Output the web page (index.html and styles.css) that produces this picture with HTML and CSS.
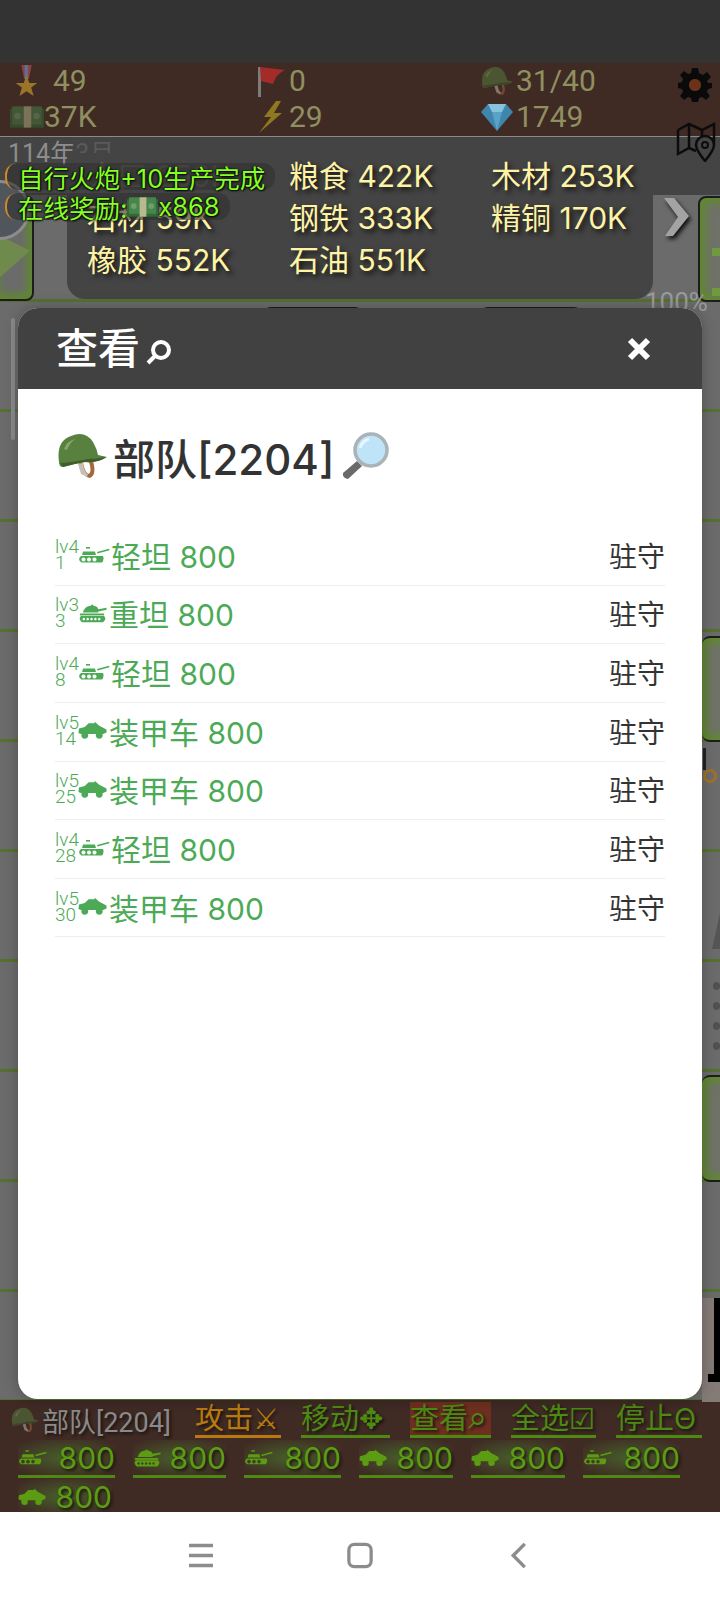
FILE: index.html
```html
<!DOCTYPE html>
<html>
<head>
  <meta charset="utf-8">
  <link rel="stylesheet" href="styles.css">
</head>

<body>
  <svg class="defs" width="0" height="0">
    <symbol id="light" viewBox="0 0 33 16">
      <rect x="8" y="0" width="4" height="1.6" />
      <path d="M5 4.5 H17 L18 8 H4 Z" />
      <path d="M19 5 L31 1.8 L31.5 3.2 L19.5 6.6 Z" />
      <path fill-rule="evenodd" d="M3 9 H25 Q26.500 12.500 24 15.500 H3.500 Q-1 12.500 3 9 Z M5.500 10.500 a2 2 0 1 0 .01 0 Z M11 10.500 a2 2 0 1 0 .01 0 Z M16.500 10.500 a2 2 0 1 0 .01 0 Z" />
    </symbol>
    <symbol id="heavy" viewBox="0 0 30 19">
      <path d="M6 6 Q8 2 13 1.500 L15 0 L16 1.500 Q20 2 21 5 L29.500 3.500 V5.500 L21 7.500 V8.500 H5 Z" />
      <rect x="2" y="9.500" width="25" height="2" />
      <path fill-rule="evenodd" d="M3 12 H27 Q30 15 26 18.500 H4 Q0 15 3 12 Z M6 14 a1.300 1.300 0 1 0 .01 0 Z M10 14 a1.300 1.300 0 1 0 .01 0 Z M14 14 a1.300 1.300 0 1 0 .01 0 Z M18 14 a1.300 1.300 0 1 0 .01 0 Z M22 14 a1.300 1.300 0 1 0 .01 0 Z" />
    </symbol>
    <symbol id="car" viewBox="0 0 30 18">
      <path d="M1 7 L7 5.500 L11 1.500 H17 L17.500 0 L19 1.500 L22 4 L29.500 8 V11 L26 12.500 H3 L0.500 11.500 Z" />
      <circle cx="7" cy="14" r="3.500" />
      <circle cx="22" cy="14" r="3.500" />
    </symbol>
    <symbol id="helmet" viewBox="0 0 50 46">
      <path d="M22 30 Q25 44 33 45 Q40 42 36 28 L32 29 Q35 38 32 41 Q28 40 26 30 Z" fill="#a5683a" />
      <path d="M21 31 L24 41 L30 44 L31 41 Q27 39 26 30 Z" fill="#c8c0b4" />
      <path d="M2 29 Q-1 8 14 3 Q28 -3 36 9 Q40 16 41 22 L50 24 Q42 30 28 29 Q16 31 6 34 Q2 34 2 29 Z" fill="#58803f" />
      <path d="M7 16 Q10 8 18 6 Q12 11 10 17 Z" fill="#86a86a" />
      <path d="M3 30 Q18 29 30 26 Q40 26 49 24 Q42 30 28 29 Q16 31 6 34 Z" fill="#3e5e2c" />
    </symbol>
    <symbol id="cash" viewBox="0 0 32 22">
      <rect x="0" y="3" width="32" height="18" fill="#2f6a38" />
      <rect x="2" y="1" width="28" height="17" fill="#47854a" />
      <rect x="13" y="1" width="7" height="20" fill="#b9b88f" />
      <circle cx="7" cy="10" r="3" fill="#6da06c" />
      <circle cx="25" cy="10" r="3" fill="#6da06c" />
    </symbol>
  </svg>

  <div class="screen">
    <div class="status"></div>

    <div class="top">
      <div class="stat">
        <svg class="ico ico-a" viewBox="0 0 34 34">
          <path d="M11 0 H22 L19 15 H14 Z" fill="#8a4444" />
          <path d="M14.500 0 H18 V15 H14.500 Z" fill="#626f92" />
          <path d="M16.500 11 L19.500 19 L28 19 L21.500 24 L24 33 L16.500 28 L9 33 L11.500 24 L5 19 L13.500 19 Z" fill="#9a7428" />
        </svg>
        <span class="val push">49</span>
      </div>
      <div class="stat">
        <svg class="ico ico-b" viewBox="0 0 30 32">
          <rect x="2" y="2" width="3" height="30" fill="#7b7b7b" />
          <path d="M4 2 L29 5 Q20 9 17 19 L5 16 Z" fill="#a32c28" />
        </svg>
        <span class="val">0</span>
      </div>
      <div class="stat">
        <svg class="ico ico-c dim"><use href="#helmet" /></svg>
        <span class="val">31/40</span>
      </div>
      <div class="stat">
        <svg class="ico ico-a dim"><use href="#cash" /></svg>
        <span class="val">37K</span>
      </div>
      <div class="stat">
        <svg class="ico ico-b" viewBox="0 0 30 32">
          <path d="M20 0 L8 16 H15 L3 32 L26 12 H18 L25 0 Z" fill="#8f7820" />
        </svg>
        <span class="val">29</span>
      </div>
      <div class="stat">
        <svg class="ico ico-c" viewBox="0 0 32 28">
          <path d="M7 1 H25 L32 9 L16 28 L0 9 Z" fill="#3f86ad" />
          <path d="M7 1 L11 9 H21 L25 1 Z" fill="#86c2de" />
          <path d="M11 9 L16 28 L21 9 Z" fill="#5ba2c8" />
        </svg>
        <span class="val">1749</span>
      </div>
    </div>

    <div class="stage">
      <div class="date-bar"><span class="date">114年<i>3月</i></span></div>
      <div class="map">
        <div class="tile tile-left">
          <svg class="tile-arrow" viewBox="0 0 34 70"><path d="M0 22 L32 38 L0 66 Z" fill="#6f8a4c" /></svg>
        </div>
        <div class="tile tile-right"></div>
        <div class="tile tile-mid-a"></div>
        <div class="tile tile-mid-b"></div>
        <div class="tile tile-side-a"></div>
        <div class="tile tile-side-b"></div>
        <div class="ring"></div>
        <div class="peak"></div>
        <div class="dots"><span></span><span></span><span></span><span></span></div>
        <div class="land"></div>
        <div class="pct">100%</div>
        <svg class="next" viewBox="0 0 28 40"><path d="M1 0 H11 L26 18 L10 38 H2 L15 19 Z" fill="#a3a3a3" /></svg>
        <div class="scroll"></div>
      </div>

      <div class="res">
        <div class="res-cell">人口 259K</div>
        <div class="res-cell">粮食 422K</div>
        <div class="res-cell">木材 253K</div>
        <div class="res-cell">石材 59K</div>
        <div class="res-cell">钢铁 333K</div>
        <div class="res-cell">精铜 170K</div>
        <div class="res-cell">橡胶 552K</div>
        <div class="res-cell">石油 551K</div>
      </div>

      <div class="orb"></div>
      <div class="toasts">
        <div class="toast">自行火炮+10生产完成</div>
        <div class="toast">在线奖励:<svg class="toast-cash"><use href="#cash" /></svg>x868</div>
      </div>

      <div class="modal">
        <div class="modal-head">
          <span class="modal-title">查看<svg class="title-lens" viewBox="0 0 26 26"><circle cx="15" cy="11" r="8" fill="none" stroke="#fff" stroke-width="4" /><path d="M9 17 L2 24" stroke="#fff" stroke-width="4" /></svg></span>
          <svg class="close" viewBox="0 0 26 26"><path d="M4 4 L22 22 M22 4 L4 22" stroke="#fff" stroke-width="6" /></svg>
        </div>
        <div class="modal-body">
          <div class="army">
            <svg class="army-helmet"><use href="#helmet" /></svg>
            <span class="army-name">部队[2204]</span>
            <svg class="army-lens" viewBox="0 0 50 48">
              <path d="M3 41 L17 29 L22 34 L8 47 Q2 46 3 41 Z" fill="#6a6a6a" />
              <circle cx="31" cy="18" r="16" fill="#bfe3f7" stroke="#a9b3b8" stroke-width="3.500" />
              <path d="M20 16 Q22 9 29 7" stroke="#e8f6ff" stroke-width="3" fill="none" />
            </svg>
          </div>

          <div class="row">
            <span class="unit"><span class="lv">lv4<br>1</span><svg class="tank-l"><use href="#light" /></svg>轻坦 800</span>
            <span class="state">驻守</span>
          </div>
          <div class="row">
            <span class="unit"><span class="lv">lv3<br>3</span><svg class="tank-h"><use href="#heavy" /></svg>重坦 800</span>
            <span class="state">驻守</span>
          </div>
          <div class="row">
            <span class="unit"><span class="lv">lv4<br>8</span><svg class="tank-l"><use href="#light" /></svg>轻坦 800</span>
            <span class="state">驻守</span>
          </div>
          <div class="row">
            <span class="unit"><span class="lv">lv5<br>14</span><svg class="tank-c"><use href="#car" /></svg>装甲车 800</span>
            <span class="state">驻守</span>
          </div>
          <div class="row">
            <span class="unit"><span class="lv">lv5<br>25</span><svg class="tank-c"><use href="#car" /></svg>装甲车 800</span>
            <span class="state">驻守</span>
          </div>
          <div class="row">
            <span class="unit"><span class="lv">lv4<br>28</span><svg class="tank-l"><use href="#light" /></svg>轻坦 800</span>
            <span class="state">驻守</span>
          </div>
          <div class="row">
            <span class="unit"><span class="lv">lv5<br>30</span><svg class="tank-c"><use href="#car" /></svg>装甲车 800</span>
            <span class="state">驻守</span>
          </div>
        </div>
      </div>

      <svg class="map-icon" viewBox="0 0 40 40">
        <path d="M2 8 L13 2 L26 8 L38 2 V22 M2 8 V32 L13 26 L20 29 M13 2 V26 M26 8 V18" fill="none" stroke="#0c0c0c" stroke-width="2.500" />
        <path d="M29 39 Q20 28 20 23 A9 9 0 0 1 38 23 Q38 28 29 39 Z" fill="#444" stroke="#0c0c0c" stroke-width="2.500" />
        <circle cx="29" cy="23" r="3" fill="none" stroke="#0c0c0c" stroke-width="2" />
      </svg>
      <svg class="gear" viewBox="0 0 34 34">
        <path fill="#0a0a0a" fill-rule="evenodd" d="M14 0 H20 L21 5 L25 7 L29 4 L33 9 L29 13 L30 15 H34 V20 L30 21 L29 24 L32 28 L28 32 L24 29 L21 30 L20 34 H14 L13 30 L10 29 L6 32 L2 28 L5 24 L4 21 L0 20 V15 L4 14 L5 11 L2 7 L6 3 L10 6 L13 5 Z M17 11 a6 6 0 1 0 .01 0 Z" />
        <circle cx="17" cy="17" r="6" fill="#6a3218" />
      </svg>
    </div>

    <div class="bottom">
      <div class="acts">
        <svg class="act-helmet dim"><use href="#helmet" /></svg>
        <span class="act-name">部队[2204]</span>
        <span class="act act-atk w-86">攻击⚔</span>
        <span class="act w-89">移动✥</span>
        <span class="act act-on w-81">查看<i>⌕</i></span>
        <span class="act w-85">全选☑</span>
        <span class="act w-86">停止Θ</span>
      </div>
      <div class="squads">
        <span class="squad w-97"><svg class="sq-l"><use href="#light" /></svg>800</span>
        <span class="squad w-93"><svg class="sq-h"><use href="#heavy" /></svg>800</span>
        <span class="squad w-97"><svg class="sq-l"><use href="#light" /></svg>800</span>
        <span class="squad w-94"><svg class="sq-c"><use href="#car" /></svg>800</span>
        <span class="squad w-94"><svg class="sq-c"><use href="#car" /></svg>800</span>
        <span class="squad w-97"><svg class="sq-l"><use href="#light" /></svg>800</span>
        <span class="squad w-94"><svg class="sq-c"><use href="#car" /></svg>800</span>
      </div>
    </div>

    <div class="nav">
      <svg class="nav-ico" viewBox="0 0 26 26"><path d="M1 3 H25 M1 13 H25 M1 23 H25" stroke="#8c8c8c" stroke-width="3.500" /></svg>
      <svg class="nav-ico" viewBox="0 0 28 28"><rect x="2" y="2" width="24" height="24" rx="6" fill="none" stroke="#8c8c8c" stroke-width="3.500" /></svg>
      <svg class="nav-ico" viewBox="0 0 18 28"><path d="M15 2 L3 14 L15 26" fill="none" stroke="#8c8c8c" stroke-width="3.500" /></svg>
    </div>
  </div>
</body>

</html>
```

FILE: styles.css
```css
* {
  box-sizing: border-box;
}

body {
  margin: 0;
  font-family: Inter, "Noto Sans CJK SC", "DejaVu Sans", sans-serif;
}

.defs {
  position: absolute;
}

.screen {
  display: flex;
  flex-direction: column;
  width: 720px;
  height: 1600px;
  overflow: hidden;
}

.status {
  height: 63px;
  background: #333;
}

.top {
  display: grid;
  grid-template-columns: 246px 225px 1fr;
  grid-auto-rows: 36px;
  height: 73px;
  padding-left: 10px;
  background: #3f2a24;
}

.stat {
  display: flex;
  align-items: center;
}

.ico-a {
  width: 34px;
  height: 32px;
}

.ico-b {
  width: 30px;
  height: 32px;
  margin-right: 3px;
}

.ico-c {
  width: 32px;
  height: 30px;
  margin-right: 3px;
}

.dim {
  opacity: 0.5;
}

.val {
  font-family: Roboto, sans-serif;
  font-size: 30px;
  line-height: 1;
  color: #8f9060;
}

.push {
  margin-left: 9px;
}

.stage {
  position: relative;
  flex: 1;
  background: #6b6b6b;
}

.date-bar {
  height: 59px;
  padding: 2px 0 0 8px;
  border-top: 1px solid #8a8a8a;
  background: #444;
}

.date {
  font-family: Roboto, "Noto Sans CJK SC", sans-serif;
  font-size: 25px;
  line-height: 30px;
  color: #8d8d8d;
}

.date i {
  font-style: normal;
  color: #5a5a5a;
}

.map {
  position: relative;
  height: 1205px;
  background:
    repeating-linear-gradient(to bottom, transparent 0, transparent 104px, #55702f 104px, #55702f 107px, transparent 107px, transparent 110px);
}

.tile {
  position: absolute;
  border: 2px solid #1d1d1d;
  border-radius: 8px;
  box-shadow: inset 0 0 8px 5px #5f8a2c;
  background: #6f7268;
}

.tile-left {
  left: -8px;
  top: 0;
  width: 42px;
  height: 106px;
  background: #6b6b6b;
}

.tile-arrow {
  position: absolute;
  left: 6px;
  top: 16px;
  width: 32px;
  height: 70px;
}

.tile-right {
  left: 698px;
  top: 1px;
  width: 40px;
  height: 106px;
}

.tile-right::after {
  content: "";
  position: absolute;
  left: 12px;
  top: 50px;
  width: 10px;
  height: 32px;
  border-top: 8px solid #6f9a40;
  border-bottom: 8px solid #6f9a40;
}

.tile-mid-a {
  left: 263px;
  top: 112px;
  width: 100px;
  height: 50px;
}

.tile-mid-b {
  left: 480px;
  top: 112px;
  width: 102px;
  height: 50px;
}

.tile-side-a {
  left: 702px;
  top: 441px;
  width: 40px;
  height: 106px;
  border-width: 2px 0 2px 0;
}

.tile-side-b {
  left: 702px;
  top: 880px;
  width: 40px;
  height: 107px;
  border-width: 2px 0 2px 0;
}

.ring {
  position: absolute;
  left: 703px;
  top: 574px;
  width: 14px;
  height: 14px;
  border: 3px solid #a0702a;
  border-radius: 50%;
}

.ring::before {
  content: "";
  position: absolute;
  left: -3px;
  top: -24px;
  width: 3px;
  height: 22px;
  background: #222;
}

.peak {
  position: absolute;
  left: 712px;
  top: 718px;
  width: 0;
  height: 0;
  border-left: 8px solid transparent;
  border-bottom: 36px solid #555;
}

.dots {
  position: absolute;
  left: 713px;
  top: 787px;
  display: flex;
  flex-direction: column;
  gap: 12px;
}

.dots span {
  display: block;
  width: 7px;
  height: 8px;
  border-radius: 50%;
  background: #505050;
}

.land {
  position: absolute;
  left: 702px;
  top: 1103px;
  width: 18px;
  height: 104px;
  background: #847a76;
}

.land::after {
  content: "";
  position: absolute;
  right: 0;
  top: 0;
  width: 6px;
  height: 84px;
  background: #000;
}

.land::before {
  content: "";
  position: absolute;
  right: 0;
  top: 76px;
  width: 12px;
  height: 8px;
  background: #000;
}

.pct {
  position: absolute;
  left: 645px;
  top: 92px;
  font-family: Roboto, sans-serif;
  font-size: 26px;
  line-height: 30px;
  color: #9a9a9a;
}

.next {
  position: absolute;
  left: 663px;
  top: 3px;
  width: 28px;
  height: 40px;
  filter: drop-shadow(2px 3px 2px #111);
}

.scroll {
  position: absolute;
  left: 11px;
  top: 123px;
  width: 4px;
  height: 122px;
  border-radius: 2px;
  background: #8a8a8a;
}

.res {
  position: absolute;
  left: 67px;
  top: 17px;
  display: grid;
  grid-template-columns: 202px 202px 1fr;
  grid-auto-rows: 42px;
  width: 586px;
  height: 146px;
  padding: 0 0 0 20px;
  border-radius: 0 0 18px 18px;
  background: #444;
}

.res-cell {
  display: flex;
  align-items: center;
  font-size: 30px;
  white-space: nowrap;
  color: #fff3a6;
  text-shadow: 3px 3px 5px #111;
}

.res-cell:first-child {
  color: #615f49;
  text-shadow: none;
}

.orb {
  position: absolute;
  left: -30px;
  top: 44px;
  width: 60px;
  height: 60px;
  border: 3px solid #8c8c8c;
  border-radius: 50%;
  background: #50565c;
}

.toasts {
  position: absolute;
  left: 5px;
  top: 27px;
  display: flex;
  flex-direction: column;
  align-items: flex-start;
  gap: 3px;
}

.toast {
  display: flex;
  align-items: center;
  height: 27px;
  padding: 0 10px 0 11px;
  border-left: 2px solid #c98a2a;
  border-radius: 12px;
  font-size: 25.500px;
  white-space: nowrap;
  color: #86ff22;
  background: rgba(48, 48, 48, 0.6);
  text-shadow: 1px 1px 2px #000, -1px 0 2px #000;
}

.toast-cash {
  width: 31px;
  height: 22px;
}

.modal {
  position: absolute;
  left: 18px;
  top: 172px;
  display: flex;
  flex-direction: column;
  width: 684px;
  height: 1091px;
  border-radius: 20px;
  overflow: hidden;
  background: #fff;
  box-shadow: 0 0 14px rgba(0, 0, 0, 0.25);
}

.modal-head {
  display: flex;
  flex: none;
  align-items: center;
  justify-content: space-between;
  height: 81px;
  padding: 0 50px 0 38px;
  background: #414141;
}

.modal-title {
  display: flex;
  align-items: center;
  font-size: 42px;
  font-weight: 500;
  line-height: 80px;
  color: #fff;
}

.title-lens {
  width: 26px;
  height: 26px;
  margin: 6px 0 0 6px;
}

.close {
  width: 26px;
  height: 26px;
}

.modal-body {
  padding: 0 37px;
}

.army {
  display: flex;
  align-items: center;
  height: 138px;
  padding-bottom: 4px;
}

.army-helmet {
  width: 50px;
  height: 46px;
  margin: 0 6px 0 2px;
}

.army-name {
  font-size: 42px;
  font-weight: 500;
  color: #333;
}

.army-lens {
  width: 50px;
  height: 48px;
  margin-left: 6px;
}

.row {
  display: flex;
  align-items: center;
  justify-content: space-between;
  height: 58.650px;
  padding-bottom: 2px;
  border-bottom: 1px solid #eee;
}

.unit {
  display: flex;
  align-items: center;
  font-size: 30px;
  color: #4caa57;
}

.lv {
  width: 23px;
  font-family: Roboto, sans-serif;
  font-size: 19px;
  font-weight: 300;
  line-height: 16px;
}

.tank-l {
  width: 33px;
  height: 16px;
  fill: #4caa57;
}

.tank-h,
.tank-c {
  width: 29px;
  height: 19px;
  margin-right: 2px;
  fill: #4caa57;
}

.state {
  font-size: 28px;
  color: #333;
}

.map-icon {
  position: absolute;
  left: 676px;
  top: -14px;
  width: 40px;
  height: 40px;
}

.gear {
  position: absolute;
  left: 678px;
  top: -68px;
  width: 34px;
  height: 34px;
}

.bottom {
  height: 112px;
  padding-left: 11px;
  background: #3f2a24;
}

.acts {
  display: flex;
  align-items: center;
  gap: 20px;
  height: 40px;
}

.act-helmet {
  width: 28px;
  height: 28px;
  margin-right: -17px;
}

.act-name {
  font-family: Roboto, "Noto Sans CJK SC", sans-serif;
  font-size: 27px;
  color: #8a8a8a;
  text-shadow: 2px 2px 3px #1c1410;
  width: 133px;
  white-space: nowrap;
}

.act {
  display: block;
  font-size: 29px;
  line-height: 33px;
  white-space: nowrap;
  color: #4c8a12;
  border-bottom: 3px solid #4c8a12;
  text-shadow: 2px 2px 3px #1c1410;
}

.act i {
  font-style: normal;
  font-size: 34px;
  line-height: 20px;
}

.act-atk {
  color: #b87a10;
  border-bottom-color: #b87a10;
}

.act-on {
  background: #6e2f20;
}

.w-81 {
  width: 81px;
}

.w-85 {
  width: 85px;
}

.w-86 {
  width: 86px;
}

.w-89 {
  width: 89px;
}

.w-93 {
  width: 93px;
}

.w-94 {
  width: 94px;
}

.w-97 {
  width: 97px;
}

.squads {
  display: flex;
  flex-wrap: wrap;
  gap: 1px 18px;
  padding-left: 7px;
}

.squad {
  display: flex;
  align-items: center;
  justify-content: space-between;
  height: 38px;
  font-size: 30px;
  color: #5c9c12;
  border-bottom: 3px solid #4c8a12;
  background: radial-gradient(ellipse at center, #47602a 0, #3f2a24 90%);
  text-shadow: 2px 2px 3px #1c1410;
}

.squad svg {
  fill: #5c9c12;
}

.sq-l {
  width: 30px;
  height: 15px;
}

.sq-h,
.sq-c {
  width: 28px;
  height: 18px;
}

.nav {
  display: flex;
  align-items: center;
  justify-content: center;
  gap: 133px;
  height: 88px;
  padding-bottom: 2px;
  background: #fff;
}

.nav-ico {
  height: 27px;
  width: 26px;
}
```
